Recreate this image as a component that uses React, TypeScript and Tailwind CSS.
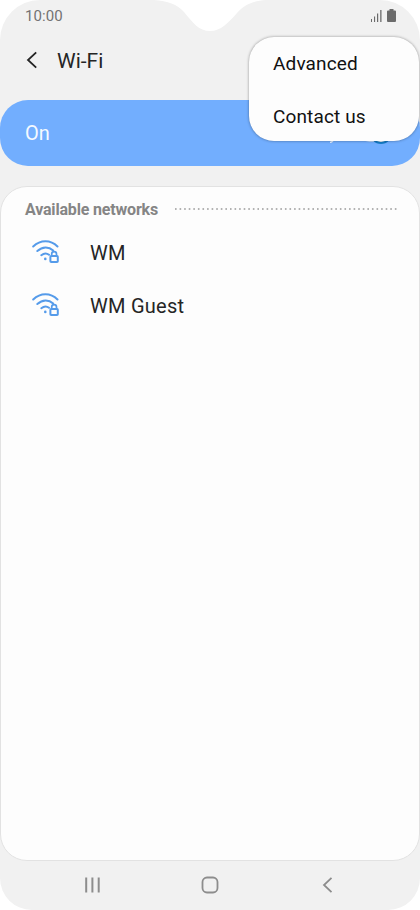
import { clsx } from "clsx";

const networks = ["WM", "WM Guest"];
const menuItems = ["Advanced", "Contact us"];

function Notch() {
  return (
    <svg className="absolute left-[154px] top-0" width="112" height="32" viewBox="0 0 112 32">
      <path d="M0 0C14 1 23 4 30 12C39 23 45 31 56 31C67 31 74 23 83 13C91 4 99 1 112 0Z" fill="#fff" />
    </svg>
  );
}

function StatusBar() {
  return (
    <div className="flex h-8 items-center justify-between pl-[25px] pr-6">
      <span className="text-[15px] leading-none tracking-[0.1px] text-[#737373]">10:00</span>
      <div className="flex items-center gap-[5px]">
        <svg width="11" height="12" viewBox="0 0 11 12" fill="#6b6b6b">
          <rect x="0" y="9" width="1" height="3" />
          <rect x="3" y="6.5" width="1.1" height="5.5" />
          <rect x="6" y="3.5" width="1.2" height="8.5" />
          <rect x="9.2" y="0" width="1.3" height="12" />
        </svg>
        <svg className="-mt-px" width="9" height="13" viewBox="0 0 9 13" fill="#6b6b6b">
          <path d="M2.5 0h4v1.5H8q1 0 1 1V12q0 1-1 1H1q-1 0-1-1V2.5q0-1 1-1h1.5z" />
        </svg>
      </div>
    </div>
  );
}

function WifiLockIcon() {
  return (
    <svg width="28" height="24" viewBox="0 0 28 24" fill="none" stroke="#559bea" strokeWidth="2" strokeLinecap="round">
      <path d="M1.2 6.5C8.5 -0.5 18.5 -0.5 25.5 6.5" />
      <path d="M5.3 11C10.5 6.3 16.7 6.3 21.2 10.4" />
      <path d="M9.3 15.2C12 13 14.8 13 17 14.8" />
      <circle cx="13.3" cy="18.9" r="1.3" fill="#559bea" stroke="none" />
      <rect x="18.4" y="15.9" width="7.4" height="6.2" rx="0.8" />
      <path d="M19.7 15.6V14a2.4 2.4 0 0 1 4.8 0V15.6" strokeWidth="1.7" />
    </svg>
  );
}

function OverflowMenu() {
  return (
    <div className="absolute left-[249px] top-[37px] z-10 flex h-[104px] w-[170px] flex-col rounded-[25px] bg-[#fdfdfd] pl-6 shadow-[0_0_3px_rgba(0,0,0,0.4)]">
      {menuItems.map((item, i) => (
        <div
          key={item}
          className={clsx("text-[19px] leading-[26px] tracking-[0.14px] text-[#111]", i === 0 ? "mt-3.5" : "mt-[27px]")}
        >
          {item}
        </div>
      ))}
    </div>
  );
}

function SwitchBar() {
  return (
    <div className="flex h-[65.5px] items-center justify-between rounded-[28px] bg-[#72aefe] pl-[25px] pr-7">
      <span className="pt-px text-[20px] leading-6 text-[#f5faff]">On</span>
      <div className="flex items-center gap-[22px]">
        <svg width="12" height="20" viewBox="0 0 12 20" fill="none" stroke="#e3efff" strokeWidth="1.5">
          <path d="M4 19.5Q7 19 9 14" />
        </svg>
        <div className="flex h-[19px] w-8 items-center justify-end rounded-full bg-[#b9d7fd]">
          <div className="h-[22px] w-[22px] shrink-0 rounded-full border-2 border-[#147bc5] bg-[#f5faff]" />
        </div>
      </div>
    </div>
  );
}

function NavBar() {
  return (
    <div className="flex h-[49px] items-center justify-between pb-[2px] pl-[84px] pr-[87px]">
      <svg width="17" height="16" viewBox="0 0 17 16" stroke="#8d8d8d" strokeWidth="2">
        <path d="M2.2 0.5V15.5M8.4 0.5V15.5M14.7 0.5V15.5" />
      </svg>
      <svg className="mr-1" width="18" height="18" viewBox="0 0 18 18" fill="none" stroke="#8d8d8d" strokeWidth="1.8">
        <rect x="1.5" y="1.5" width="15" height="15" rx="4.5" />
      </svg>
      <svg width="11" height="16" viewBox="0 0 11 16" fill="none" stroke="#8d8d8d" strokeWidth="1.8">
        <path d="M9.5 0.8L2 8l7.5 7.2" />
      </svg>
    </div>
  );
}

export default function App() {
  return (
    <div className="h-[910px] w-[420px] overflow-hidden bg-white font-['Roboto',sans-serif]">
      <div className="relative flex h-full flex-col overflow-hidden rounded-t-[40px] rounded-b-[32px] bg-[#f1f1f1]">
        <Notch />
        <StatusBar />
        <header className="flex h-[68px] items-start gap-[19px] pl-[26px] pt-4">
          <svg className="mt-[3px]" width="12" height="18" viewBox="0 0 12 18" fill="none" stroke="#252525" strokeWidth="1.8">
            <path d="M10.2 1.3L2 9l8.2 7.7" />
          </svg>
          <h1 className="pt-px text-[21px] leading-6 text-[#252525]">Wi-Fi</h1>
        </header>
        <OverflowMenu />
        <SwitchBar />
        <main className="mt-[20.5px] flex-1 rounded-[27px] border border-[#e2e2e2] bg-[#fdfdfd]">
          <div className="flex h-[45px] items-center gap-4 pl-6 pr-5">
            <h2 className="text-[16px] font-bold leading-5 tracking-[-0.18px] text-[#858585]">Available networks</h2>
            <svg className="-mt-px h-[2px] flex-1" stroke="#999" strokeWidth="1.5">
              <line x1="1" y1="1" x2="100%" y2="1" strokeDasharray="1.6 2.98" />
            </svg>
          </div>
          <ul>
            {networks.map((name) => (
              <li key={name} className="flex h-[53.4px] items-start gap-[30px] pl-[31px] pt-2">
                <WifiLockIcon />
                <span className="pt-px text-[20px] leading-6 tracking-[0.25px] text-[#252525]">{name}</span>
              </li>
            ))}
          </ul>
        </main>
        <NavBar />
      </div>
    </div>
  );
}
